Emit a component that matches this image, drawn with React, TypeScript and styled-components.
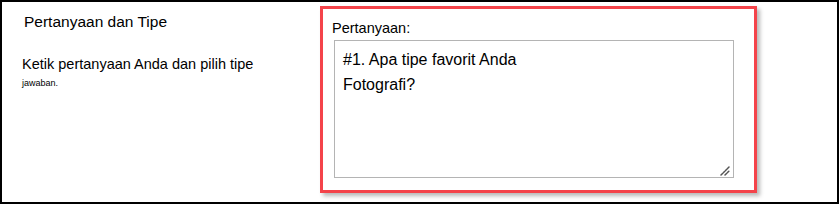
import React from "react";
import styled, { createGlobalStyle } from "styled-components";

const GlobalStyle = createGlobalStyle`
  html, body {
    margin: 0;
    padding: 0;
    background: #ffffff;
  }
  body {
    font-family: "Liberation Sans", Arial, sans-serif;
    color: #000000;
  }
`;

const Frame = styled.div`
  width: 839px;
  height: 204px;
  box-sizing: border-box;
  border: 2px solid #000000;
  display: flex;
  background: #ffffff;
`;

const InfoColumn = styled.div`
  flex: 0 0 318px;
  box-sizing: border-box;
  padding-left: 20px;
`;

const Title = styled.div`
  font-size: 15.5px;
  padding-left: 2px;
  margin-top: 11px;
`;

const Description = styled.div<{ $size: number; $gap: number }>`
  font-size: ${(p) => p.$size}px;
  margin-top: ${(p) => p.$gap}px;
`;

const Highlight = styled.div`
  margin-top: 4px;
  width: 437px;
  height: 187px;
  box-sizing: border-box;
  border: 3px solid #f4434a;
  box-shadow: 3px 3px 4px rgba(0, 0, 0, 0.28);
  padding: 11px 0 0 9px;
  display: flex;
  flex-direction: column;
`;

const FieldLabel = styled.label`
  font-size: 14.5px;
  margin-bottom: 4px;
`;

const InputWrap = styled.div`
  position: relative;
  margin-left: 2px;
  width: 400px;
  height: 138px;
`;

const QuestionInput = styled.textarea`
  display: block;
  width: 100%;
  height: 100%;
  box-sizing: border-box;
  border: 1px solid #b4b4b4;
  border-radius: 0;
  padding: 6px 8px;
  margin: 0;
  font-family: "Liberation Sans", Arial, sans-serif;
  font-size: 16px;
  line-height: 25px;
  color: #000000;
  outline: none;
  overflow: hidden;
  resize: none;
`;

const Grip = styled.svg`
  position: absolute;
  right: 3px;
  bottom: 2px;
  width: 11px;
  height: 11px;
  pointer-events: none;
`;

export default function App() {
  return (
    <>
      <GlobalStyle />
      <Frame>
        <InfoColumn>
          <Title>Pertanyaan dan Tipe</Title>
          <Description $size={14.5} $gap={25}>
            Ketik pertanyaan Anda dan pilih tipe
          </Description>
          <Description $size={9} $gap={6}>
            jawaban.
          </Description>
        </InfoColumn>
        <Highlight>
          <FieldLabel htmlFor="question">Pertanyaan:</FieldLabel>
          <InputWrap>
            <QuestionInput
              id="question"
              defaultValue={"#1. Apa tipe favorit Anda\nFotografi?"}
            />
            <Grip viewBox="0 0 11 11">
              <path
                d="M1 10 L9 2 M5 10 L9 6"
                stroke="#555555"
                strokeWidth="1.5"
                strokeLinecap="round"
                strokeDasharray="2.2 1"
                fill="none"
              />
            </Grip>
          </InputWrap>
        </Highlight>
      </Frame>
    </>
  );
}
